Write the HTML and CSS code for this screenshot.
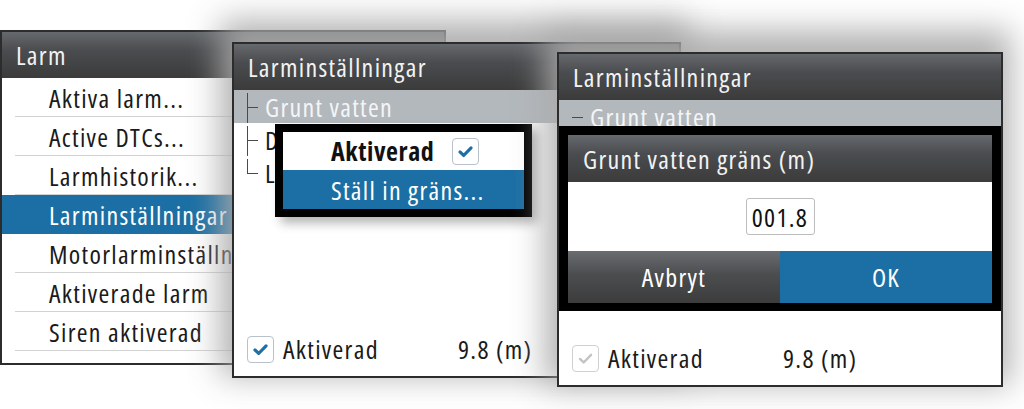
FILE: index.html
```html
<!DOCTYPE html>
<html lang="sv">
<head>
<meta charset="utf-8">
<title>Larm</title>
<link rel="stylesheet" href="styles.css">
</head>
<body>
<div class="desk">
  <section class="win win1">
    <header class="win-title">Larm</header>
    <ul class="menu">
      <li class="menu-item">Aktiva larm...</li>
      <li class="menu-item">Active DTCs...</li>
      <li class="menu-item">Larmhistorik...</li>
      <li class="menu-item is-selected">Larminställningar</li>
      <li class="menu-item">Motorlarminställningar</li>
      <li class="menu-item">Aktiverade larm</li>
      <li class="menu-item">Siren aktiverad</li>
    </ul>
  </section>

  <section class="win win2">
    <header class="win-title">Larminställningar</header>
    <ul class="tree">
      <li class="tree-item is-band">Grunt vatten</li>
      <li class="tree-item"><span class="clip">Djupt vatten</span></li>
      <li class="tree-item"><span class="clip">Låg vattentemp</span></li>
    </ul>
    <div class="foot">
      <span class="chk">
        <svg viewBox="0 0 27 27" width="27" height="27"><path d="M7.5 14 L11.5 17.8 L19.5 9.5" /></svg>
      </span>
      <span class="foot-label">Aktiverad</span>
      <span class="foot-value">9.8 (m)</span>
    </div>
    <div class="popup">
      <div class="popup-row">
        <span class="popup-bold">Aktiverad</span>
        <span class="chk">
          <svg viewBox="0 0 27 27" width="27" height="27"><path d="M7.5 14 L11.5 17.8 L19.5 9.5" /></svg>
        </span>
      </div>
      <div class="popup-row is-selected">Ställ in gräns...</div>
    </div>
  </section>

  <section class="win win3">
    <header class="win-title">Larminställningar</header>
    <ul class="tree">
      <li class="tree-item is-band">Grunt vatten</li>
    </ul>
    <div class="foot">
      <span class="chk is-disabled">
        <svg viewBox="0 0 27 27" width="27" height="27"><path d="M7.5 14 L11.5 17.8 L19.5 9.5" /></svg>
      </span>
      <span class="foot-label">Aktiverad</span>
      <span class="foot-value">9.8 (m)</span>
    </div>
    <div class="dialog">
      <div class="dialog-title">Grunt vatten gräns (m)</div>
      <div class="dialog-body">
        <span class="num-input">001.8</span>
      </div>
      <div class="dialog-buttons">
        <span class="btn btn-cancel">Avbryt</span>
        <span class="btn btn-ok">OK</span>
      </div>
    </div>
  </section>
</div>
</body>
</html>
```

FILE: styles.css
```css
* { box-sizing: border-box; }

html, body {
  margin: 0;
  padding: 0;
  background: #ffffff;
}

body {
  font-family: "Open Sans", "Liberation Sans", sans-serif;
  font-stretch: 75%;
  letter-spacing: 1.3px;
  color: #1a1a1a;
}

.desk {
  position: relative;
  width: 1024px;
  height: 409px;
  overflow: hidden;
  background: #ffffff;
}

/* windows on a desktop */
.win {
  position: absolute;
  display: flex;
  flex-direction: column;
  background: #ffffff;
  border: 2px solid #2c2c2c;
}

.win1 { left: 0; top: 30px; width: 446px; height: 335px; }
.win2 {
  left: 232px; top: 42px; width: 449px; height: 336px;
  box-shadow: -2px -12px 30px 10px rgba(170, 170, 170, 0.9);
}
.win3 {
  left: 557px; top: 52px; width: 446px; height: 335px;
  box-shadow: -2px -12px 30px 10px rgba(170, 170, 170, 0.9);
}

.win-title {
  flex: none;
  height: 46px;
  display: flex;
  align-items: center;
  padding-left: 14px;
  font-size: 26px;
  color: #f2f2f2;
  background: linear-gradient(#66696d 0%, #4a4c4f 40%, #3b3b3b 100%);
}

/* win1 menu */
.menu {
  list-style: none;
  margin: 0;
  padding: 0;
}

.menu-item {
  position: relative;
  height: 39px;
  display: flex;
  align-items: center;
  padding-left: 47px;
  font-size: 26px;
  white-space: nowrap;
  overflow: hidden;
}

.menu-item::after {
  content: "";
  position: absolute;
  left: 13px;
  right: 0;
  bottom: 0;
  border-bottom: 1px solid #d2d2d2;
}

.menu-item.is-selected {
  background: #1b6fa4;
  color: #ffffff;
}

.menu-item.is-selected::after { display: none; }

/* tree */
.tree {
  list-style: none;
  margin: 0;
  padding: 0;
}

.tree-item {
  position: relative;
  height: 33px;
  display: flex;
  align-items: center;
  padding-left: 31px;
  font-size: 26px;
  white-space: nowrap;
}

.tree-item::before {
  content: "";
  position: absolute;
  left: 13px;
  top: 50%;
  width: 11px;
  border-top: 1px solid #4a4a4a;
}

.tree-item::after {
  content: "";
  position: absolute;
  left: 13px;
  top: 3px;
  bottom: 0;
  border-left: 1px solid #4a4a4a;
}

.tree-item:last-child::after { bottom: 50%; }

.tree-item.is-band {
  background: #b3b8bc;
  color: #f3f5f7;
}

.win3 .tree-item.is-band::after { display: none; }

.clip {
  display: inline-block;
  width: 12px;
  overflow: hidden;
}

/* checkbox */
.chk {
  flex: none;
  width: 27px;
  height: 27px;
  display: inline-flex;
  border: 1.5px solid #b9c2ca;
  border-radius: 4px;
  background: #ffffff;
}

.chk svg { display: block; width: 100%; height: 100%; }

.chk path {
  fill: none;
  stroke: #1d6fa6;
  stroke-width: 3.4;
  stroke-linecap: round;
  stroke-linejoin: round;
}

.chk.is-disabled { border-color: #d0d0d0; }
.chk.is-disabled path { stroke: #c4c4c4; stroke-width: 2.6; }

/* footer row */
.foot {
  margin-top: auto;
  margin-bottom: 6px;
  height: 42px;
  display: flex;
  align-items: center;
  padding-left: 13px;
  font-size: 26px;
}

.foot .chk { margin-right: 9px; }

.foot-label { width: 175px; }

/* popup menu over win2 */
.popup {
  position: absolute;
  left: 41px;
  top: 80px;
  width: 257px;
  border: 8px solid #000000;
  background: #ffffff;
  box-shadow: 6px 6px 10px rgba(0, 0, 0, 0.3);
}

.popup-row {
  height: 38px;
  display: flex;
  align-items: center;
  gap: 18px;
  padding-left: 48px;
  font-size: 26px;
  white-space: nowrap;
}

.popup-row.is-selected {
  height: 39px;
  background: #1b6fa4;
  color: #ffffff;
}

.popup-bold { font-weight: 700; color: #111111; letter-spacing: 0.6px; }

/* dialog over win3 */
.dialog {
  position: absolute;
  left: 0;
  right: 0;
  top: 72px;
  border: 9px solid #000000;
  border-bottom-width: 8px;
  background: #ffffff;
}

.dialog-title {
  height: 47px;
  display: flex;
  align-items: center;
  padding-left: 15px;
  font-size: 26px;
  color: #f2f2f2;
  background: linear-gradient(#66696d 0%, #4a4c4f 40%, #3b3b3b 100%);
}

.dialog-body {
  height: 69px;
  display: flex;
  align-items: center;
  justify-content: center;
}

.num-input {
  width: 69px;
  height: 37px;
  display: flex;
  align-items: center;
  justify-content: center;
  border: 1px solid #bdbdbd;
  border-radius: 3px;
  font-size: 26px;
  color: #111111;
}

.dialog-buttons {
  height: 52px;
  display: grid;
  grid-template-columns: 1fr 1fr;
}

.btn {
  display: flex;
  align-items: center;
  justify-content: center;
  font-size: 26px;
  color: #ffffff;
}

.btn-cancel {
  background: linear-gradient(#6a6d70 0%, #4b4d4f 45%, #3c3c3c 100%);
}

.btn-ok { background: #1b6fa4; }
```
